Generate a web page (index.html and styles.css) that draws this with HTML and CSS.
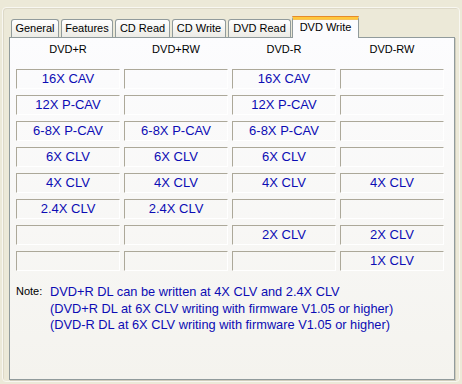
FILE: index.html
```html
<!DOCTYPE html>
<html lang="en">
<head>
    <meta charset="UTF-8">
    <title>DVD Write</title>
    <link rel="stylesheet" href="styles.css">
</head>
<body>
    <div class="frame">
        <div class="tabs">
            <div class="tab t-general">General</div>
            <div class="tab t-features">Features</div>
            <div class="tab t-cdread">CD Read</div>
            <div class="tab t-cdwrite">CD Write</div>
            <div class="tab t-dvdread">DVD Read</div>
            <div class="tab active t-dvdwrite">DVD Write</div>
        </div>

        <div class="panel">
            <div class="grid">
                <div class="head">DVD+R</div>
                <div class="head">DVD+RW</div>
                <div class="head">DVD-R</div>
                <div class="head">DVD-RW</div>

                <div class="cell">16X CAV</div>
                <div class="cell"></div>
                <div class="cell">16X CAV</div>
                <div class="cell"></div>

                <div class="cell">12X P-CAV</div>
                <div class="cell"></div>
                <div class="cell">12X P-CAV</div>
                <div class="cell"></div>

                <div class="cell">6-8X P-CAV</div>
                <div class="cell">6-8X P-CAV</div>
                <div class="cell">6-8X P-CAV</div>
                <div class="cell"></div>

                <div class="cell">6X CLV</div>
                <div class="cell">6X CLV</div>
                <div class="cell">6X CLV</div>
                <div class="cell"></div>

                <div class="cell">4X CLV</div>
                <div class="cell">4X CLV</div>
                <div class="cell">4X CLV</div>
                <div class="cell">4X CLV</div>

                <div class="cell">2.4X CLV</div>
                <div class="cell">2.4X CLV</div>
                <div class="cell"></div>
                <div class="cell"></div>

                <div class="cell"></div>
                <div class="cell"></div>
                <div class="cell">2X CLV</div>
                <div class="cell">2X CLV</div>

                <div class="cell"></div>
                <div class="cell"></div>
                <div class="cell"></div>
                <div class="cell">1X CLV</div>
            </div>

            <div class="note">
                <div class="note-label">Note:</div>
                <div class="note-text">
                    DVD+R DL can be written at 4X CLV and 2.4X CLV<br>
                    (DVD+R DL at 6X CLV writing with firmware V1.05 or higher)<br>
                    (DVD-R DL at 6X CLV writing with firmware V1.05 or higher)
                </div>
            </div>
        </div>
    </div>
</body>
</html>
```

FILE: styles.css
```css
body { margin: 0; background: #ece9d8; font-family: "Liberation Sans", Arial, sans-serif; font-size: 11px; color: #000; }

.frame { margin: 7px 2px 0 2px; height: 375px; box-sizing: border-box; border: 1px solid #f8f7f1; border-radius: 4px; padding: 8px 5px 0 6px; box-shadow: inset 1px 1px 0 #ddd9c8; }

.tabs { display: flex; align-items: flex-end; height: 21px; padding-left: 2px; }
.tab { height: 18px; box-sizing: border-box; margin-right: 2px; border: 1px solid #919b9c; border-bottom: none; border-radius: 3px 3px 0 0; background: linear-gradient(#ffffff, #ecebe6); text-align: center; line-height: 17px; }
.tab.active { position: relative; z-index: 1; height: 22px; margin: 0 0 -1px -1px; border-top: 3px solid #ffc83c; background: #fcfcfe; line-height: 16px; box-shadow: inset 0 1px 0 #f7c35a; }
.tab.active::before { content: ""; position: absolute; left: -1px; right: -1px; top: -3px; height: 1px; background: #e68b2c; border-radius: 3px 3px 0 0; }
.t-general { width: 48px; }
.t-features { width: 52px; }
.t-cdread { width: 55px; }
.t-cdwrite { width: 54px; }
.t-dvdread { width: 63px; }
.t-dvdwrite { width: 67px; }

.panel { height: 343px; width: 446px; box-sizing: border-box; border: 1px solid #919b9c; background: linear-gradient(#fcfcfe, #f4f3ee); box-shadow: 1px 1px 0 #d0cdbd; padding: 5px 0 0 6px; }

.grid { display: grid; grid-template-columns: repeat(4, 104px); grid-auto-rows: 20px; column-gap: 4px; row-gap: 6px; }
.head { text-align: center; line-height: 13px; height: 13px; margin-bottom: -2px; }
.cell { box-sizing: border-box; border-top: 1px solid #aca899; border-left: 1px solid #aca899; border-right: 1px solid #fff; border-bottom: 1px solid #fff; color: #0c0cb4; font-size: 13px; line-height: 18px; text-align: center; white-space: nowrap; }

.note { display: flex; margin-top: 13px; }
.note-label { width: 34px; line-height: 15px; }
.note-text { color: #0c0cb4; font-size: 12.8px; line-height: 16.5px; }
```
